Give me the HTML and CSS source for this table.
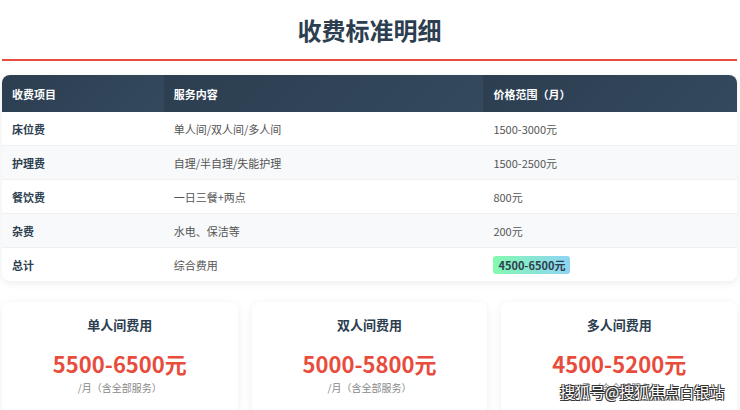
FILE: index.html
```html
<!DOCTYPE html>
<html lang="zh-CN">
<head>
    <meta charset="UTF-8">
    <meta name="viewport" content="width=device-width, initial-scale=1.0">
    <title>收费标准明细</title>
    <link rel="stylesheet" href="styles.css">
</head>
<body>
    <div class="page">
        <h1 class="title">收费标准明细</h1>

        <div class="table-wrap">
            <table class="fee-table">
                <thead>
                    <tr>
                        <th class="col-item">收费项目</th>
                        <th class="col-desc">服务内容</th>
                        <th class="col-price">价格范围（月）</th>
                    </tr>
                </thead>
                <tbody>
                    <tr>
                        <td class="item">床位费</td>
                        <td>单人间/双人间/多人间</td>
                        <td>1500-3000元</td>
                    </tr>
                    <tr>
                        <td class="item">护理费</td>
                        <td>自理/半自理/失能护理</td>
                        <td>1500-2500元</td>
                    </tr>
                    <tr>
                        <td class="item">餐饮费</td>
                        <td>一日三餐+两点</td>
                        <td>800元</td>
                    </tr>
                    <tr>
                        <td class="item">杂费</td>
                        <td>水电、保洁等</td>
                        <td>200元</td>
                    </tr>
                    <tr>
                        <td class="item">总计</td>
                        <td>综合费用</td>
                        <td><span class="total-badge">4500-6500元</span></td>
                    </tr>
                </tbody>
            </table>
        </div>

        <div class="cards">
            <div class="card">
                <h3>单人间费用</h3>
                <div class="price">5500-6500元</div>
                <p class="note">/月（含全部服务）</p>
            </div>
            <div class="card">
                <h3>双人间费用</h3>
                <div class="price">5000-5800元</div>
                <p class="note">/月（含全部服务）</p>
            </div>
            <div class="card">
                <h3>多人间费用</h3>
                <div class="price">4500-5200元</div>
                <p class="note">/月（含全部服务）</p>
            </div>
        </div>
    </div>
    <div class="watermark">搜狐号@搜狐焦点白银站</div>
</body>
</html>
```

FILE: styles.css
```css
/* base */
body {
  margin: 0;
  background-color: #fff;
  font-family: "Noto Sans CJK SC", "Noto Sans", sans-serif;
  color: #333;
  overflow: hidden;
}

.page {
  padding: 0 3px 0 2px;
}

.title {
  margin: 0;
  padding: 15px 0 14px 0;
  font-size: 24px;
  line-height: 30px;
  font-weight: bold;
  color: #2c3e50;
  text-align: center;
  border-bottom: 2px solid #e74c3c;
}

/* table */
.table-wrap {
  margin-top: 14px;
  border-radius: 8px;
  overflow: hidden;
  box-shadow: 0 2px 8px rgba(0, 0, 0, 0.08);
}

.fee-table {
  width: 100%;
  border-collapse: collapse;
  font-size: 11px;
}

.fee-table th {
  height: 37px;
  padding: 0 10px;
  text-align: left;
  color: #fff;
  font-weight: bold;
  background: linear-gradient(135deg, #2c3e50, #34495e);
}

.col-item {
  width: 22%;
}

.col-desc {
  width: 43.5%;
}

.fee-table td {
  height: 33px;
  padding: 0 10px;
  color: #555;
  border-bottom: 1px solid #eef0f2;
}

.fee-table tbody tr:nth-child(even) {
  background-color: #f7f9fa;
}

.fee-table tbody tr:last-child td {
  border-bottom: none;
}

.fee-table td.item {
  font-weight: bold;
  color: #2c3e50;
}

.total-badge {
  display: inline-block;
  padding: 1px 5px;
  border-radius: 3px;
  font-weight: bold;
  color: #2c3e50;
  background: linear-gradient(90deg, #84fab0, #8fd3f4);
}

/* cards */
.cards {
  display: grid;
  grid-template-columns: repeat(3, 1fr);
  gap: 14px;
  margin-top: 21px;
}

.card {
  background-color: #fff;
  border-radius: 8px;
  box-shadow: 0 2px 10px rgba(0, 0, 0, 0.07);
  text-align: center;
  padding: 14px 10px 20px;
}

.card h3 {
  margin: 0;
  font-size: 13px;
  line-height: 18px;
  font-weight: bold;
  color: #2c3e50;
}

.price {
  margin-top: 14px;
  font-size: 22px;
  line-height: 30px;
  font-weight: bold;
  color: #e74c3c;
}

.note {
  margin: 2px 0 0 0;
  font-size: 10px;
  color: #888;
}

/* watermark over the last card */
.watermark {
  position: absolute;
  left: 560px;
  top: 382px;
  font-size: 15px;
  line-height: 20px;
  color: #fff;
  text-shadow: -1px -1px 0 #333, 1px -1px 0 #333, -1px 1px 0 #333, 1px 1px 0 #333;
}
```
